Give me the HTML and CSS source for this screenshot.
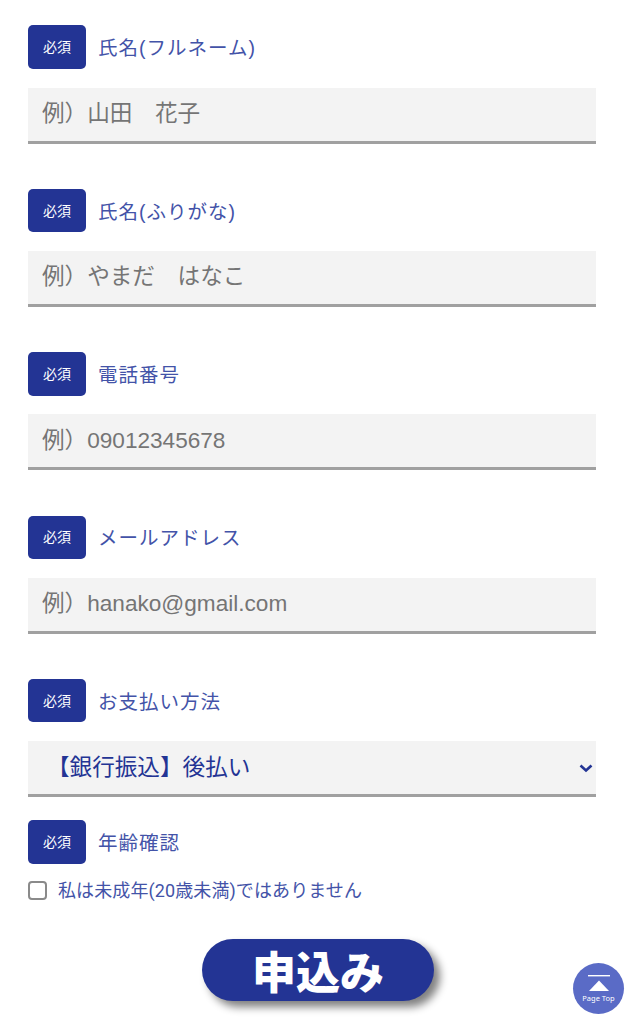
FILE: index.html
```html
<!DOCTYPE html>
<html lang="ja">

<head>
    <meta charset="UTF-8">
    <meta name="viewport" content="width=device-width, initial-scale=1.0">
    <title>お申込みフォーム</title>
    <link rel="stylesheet" href="styles.css">
</head>

<body>
    <form class="entry-form">
        <div class="field">
            <div class="field-head">
                <span class="required">必須</span>
                <label class="field-label" for="name">氏名(フルネーム)</label>
            </div>
            <input class="text-input" id="name" type="text" placeholder="例）山田　花子">
        </div>
        <div class="field">
            <div class="field-head">
                <span class="required">必須</span>
                <label class="field-label" for="kana">氏名(ふりがな)</label>
            </div>
            <input class="text-input" id="kana" type="text" placeholder="例）やまだ　はなこ">
        </div>
        <div class="field">
            <div class="field-head">
                <span class="required">必須</span>
                <label class="field-label" for="tel">電話番号</label>
            </div>
            <input class="text-input" id="tel" type="tel" placeholder="例）09012345678">
        </div>
        <div class="field">
            <div class="field-head">
                <span class="required">必須</span>
                <label class="field-label" for="mail">メールアドレス</label>
            </div>
            <input class="text-input" id="mail" type="email" placeholder="例）hanako@gmail.com">
        </div>
        <div class="field field-pay">
            <div class="field-head">
                <span class="required">必須</span>
                <label class="field-label" for="pay">お支払い方法</label>
            </div>
            <div class="select-wrap">
                <select class="select-input" id="pay">
                    <option>【銀行振込】後払い</option>
                </select>
                <svg class="select-arrow" width="14" height="9" viewBox="0 0 14 9">
                    <path d="M1.5 1.5l5.5 5 5.5-5" fill="none" stroke="#233494" stroke-width="2.6" />
                </svg>
            </div>
        </div>
        <div class="field-age">
            <div class="field-head">
                <span class="required">必須</span>
                <span class="field-label">年齢確認</span>
            </div>
            <label class="check-row">
                <input class="check-box" type="checkbox">
                <span>私は未成年(20歳未満)ではありません</span>
            </label>
        </div>
        <button class="submit-btn" type="button">申込み</button>
    </form>

    <a class="page-top" href="#">
        <svg width="22" height="17" viewBox="0 0 22 17">
            <rect x="0" y="0" width="22" height="1.4" fill="#fff" />
            <path d="M11 5.5L21 16H1z" fill="#fff" />
        </svg>
        <span class="page-top-text">Page Top</span>
    </a>
</body>

</html>
```

FILE: styles.css
```css
* {
    box-sizing: border-box;
}

body {
    font-family: "Liberation Sans", "Noto Sans CJK JP", sans-serif;
    margin: 0;
    height: 1024px;
    background-color: #fff;
    overflow: hidden;
    position: relative;
}

.entry-form {
    display: flex;
    flex-direction: column;
    padding: 25.4px 40px 0 28px;
}

.field {
    margin-bottom: 45.2px;
}

.field-pay {
    margin-bottom: 23px;
}

.field-head {
    display: flex;
    align-items: center;
    gap: 12px;
    height: 43.6px;
}

.required {
    display: flex;
    align-items: center;
    justify-content: center;
    width: 58px;
    height: 100%;
    background-color: #233494;
    border-radius: 5px;
    color: #fff;
    font-size: 14px;
    padding-bottom: 2px;
}

.field-label {
    color: #4353a8;
    font-size: 19.5px;
    letter-spacing: 1px;
    margin-bottom: 1px;
}

.text-input {
    display: block;
    width: 100%;
    height: 56px;
    margin-top: 18.6px;
    padding: 0 14px;
    border: 0;
    border-bottom: 3px solid #a0a0a0;
    border-radius: 0;
    background-color: #f3f3f3;
    font-family: inherit;
    font-size: 22.6px;
}

.select-wrap {
    position: relative;
    margin-top: 18.6px;
}

.select-input {
    display: block;
    width: 100%;
    height: 56px;
    padding: 0 19px;
    border: 0;
    border-bottom: 3px solid #a0a0a0;
    border-radius: 0;
    background-color: #f3f3f3;
    color: #233494;
    font-family: inherit;
    font-size: 22.6px;
    appearance: none;
}

.select-arrow {
    position: absolute;
    right: 3px;
    top: 23px;
}

.check-row {
    display: flex;
    align-items: center;
    gap: 11px;
    margin-top: 17px;
    height: 19px;
    color: #4353a8;
    font-family: Roboto, "Noto Sans CJK JP", sans-serif;
    font-size: 18px;
    letter-spacing: 0.1px;
    line-height: 19px;
}

.check-box {
    width: 19px;
    height: 19px;
    margin: 0;
    appearance: none;
    background-color: #fff;
    border: 2px solid #8a8a8a;
    border-radius: 4px;
}

.submit-btn {
    align-self: center;
    width: 232px;
    height: 62px;
    margin: 39px 0 0 12px;
    border: 0;
    border-radius: 31px;
    background-color: #233494;
    box-shadow: 6px 6px 8px #808080;
    color: #fff;
    font-family: "Noto Sans CJK JP", sans-serif;
    font-size: 44px;
    font-weight: 900;
    line-height: 1;
    padding: 0;
}

.page-top {
    position: absolute;
    left: 573px;
    top: 963px;
    width: 51px;
    height: 51px;
    display: flex;
    flex-direction: column;
    align-items: center;
    padding-top: 12px;
    background-color: #5a6bc6;
    border-radius: 50%;
    text-decoration: none;
}

.page-top-text {
    color: #fff;
    font-family: "Noto Sans", sans-serif;
    font-size: 7.5px;
    margin-top: 2px;
    line-height: 9px;
    white-space: nowrap;
}
```
